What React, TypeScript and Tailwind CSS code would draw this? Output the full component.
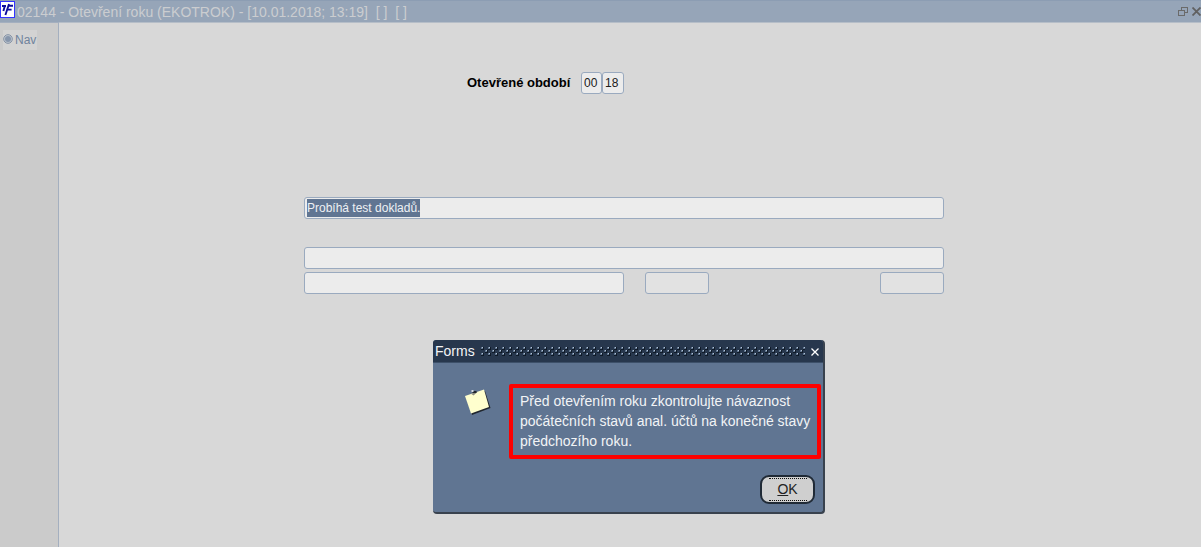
import type { ReactNode } from "react";
import { clsx } from "clsx";

const fieldClass =
  "h-[22px] rounded-[3px] border border-[#9aaabf] px-0.5 text-[12px] text-[#202020] outline-none";

interface FieldProps {
  id?: string;
  label?: string;
  value?: string;
  disabled?: boolean;
  className?: string;
}

function Field({ id, label, value = "", disabled, className }: FieldProps) {
  return (
    <input
      id={id}
      type="text"
      aria-label={label}
      defaultValue={value}
      disabled={disabled}
      className={clsx(fieldClass, disabled ? "bg-[#e2e2e2]" : "bg-[#ececec]", className)}
    />
  );
}

function Logo() {
  return (
    <svg className="h-[17px] w-[15px] shrink-0" viewBox="0 0 15 17" aria-hidden="true">
      <rect x="0.5" y="0.5" width="14" height="16" fill="#fff" stroke="#3434ff" />
      <path d="M2 5h4M4.8 5L3.4 10M9 3L5.4 14M7.8 4.8h5.2M7.2 8.6h4.4" stroke="#0c0c9c" strokeWidth="1.9" fill="none" />
    </svg>
  );
}

function TitleBar({ children }: { children: ReactNode }) {
  return (
    <header className="flex h-[22px] items-start border-t border-[#8c9db3] bg-[#96a5b8]">
      <Logo />
      <h1 className="ml-0.5 flex-1 text-[14px] leading-[22px] whitespace-pre text-[#cbcdd0]">{children}</h1>
      <div className="flex h-full items-center gap-1">
        <button type="button" aria-label="Obnovit" className="block">
          <svg className="h-[9px] w-[10px]" viewBox="0 0 10 9" fill="none" stroke="#6a6a6a" shapeRendering="crispEdges">
            <path d="M3 0.5h6.5v5H7M3.5 1v2M0.5 3.5h6v5h-6z" />
          </svg>
        </button>
        <button type="button" aria-label="Zavřít" className="block">
          <svg className="size-[9px]" viewBox="0 0 9 9" stroke="#606060" strokeWidth="1.8">
            <path d="M0.5 0.5l8 8M8.5 0.5l-8 8" />
          </svg>
        </button>
      </div>
    </header>
  );
}

function NavPanel() {
  return (
    <nav className="w-[59px] shrink-0 border-t border-r border-[#a4afbf] bg-[#cbcbcb] pt-[7px] pl-[3px]">
      <button type="button" className="flex h-5 w-[34px] items-center gap-0.5 bg-[#d3d3d3] text-[12px] text-[#70839d]">
        <svg className="mb-0.5 size-[10px] shrink-0" viewBox="0 0 10 10" aria-hidden="true">
          <circle cx="5" cy="5" r="4.3" fill="#c4cad2" stroke="#8290a4" strokeWidth="1" />
          <circle cx="5" cy="5" r="3" fill="#8796ac" />
        </svg>
        Nav
      </button>
    </nav>
  );
}

function Grip() {
  return (
    <svg className="mx-1.5 h-[9px] min-w-0 flex-1" aria-hidden="true" shapeRendering="crispEdges">
      <defs>
        <pattern id="grip" width="7" height="6" patternUnits="userSpaceOnUse">
          <path d="M0 0h3v3H0zM4 3h3v3H4z" fill="#0f1a28" />
          <path d="M0 0h2v2H0zM4 3h2v2H4z" fill="#5f748e" />
          <path d="M1 0h1v1H1zM5 3h1v1H5z" fill="#b4c4d6" />
        </pattern>
      </defs>
      <rect width="100%" height="100%" fill="url(#grip)" />
    </svg>
  );
}

function NoteIcon() {
  return (
    <svg className="size-[28px] shrink-0" viewBox="0 0 28 28" aria-hidden="true">
      <path d="M2 9L21 3l5.5 17L8 27z" fill="#20262e" />
      <path d="M1 8L20 1.5l5 17.5L7 25.5z" fill="#ffffce" />
      <path d="M7 5.8l7-2.4-4.5 4z" fill="#8d8d80" />
      <path d="M8.5 3h4v2h-4z" fill="#20262e" />
      <path d="M7.5 2h2v2h-2z" fill="#d8dce2" />
    </svg>
  );
}

function MessageDialog() {
  return (
    <section
      role="alertdialog"
      aria-labelledby="dialog-title"
      aria-describedby="dialog-text"
      className="w-[392px] rounded-[4px] border-r-2 border-b-2 border-[#39424e] bg-[#607592] text-[14px] text-[#f2f4f6]"
    >
      <header className="flex h-[23px] items-center rounded-t-[3px] border-b border-[#3d5069] bg-[#27374d] pt-px pr-1 pl-0.5">
        <h2 id="dialog-title">Forms</h2>
        <Grip />
        <button type="button" aria-label="Zavřít" className="block">
          <svg className="size-[8px]" viewBox="0 0 8 8" stroke="#fff" strokeWidth="1.3">
            <path d="M0.5 0.5l7 7M7.5 0.5l-7 7" />
          </svg>
        </button>
      </header>
      <div className="flex items-start gap-[17px] pt-[21px] pr-[3px] pl-[31px]">
        <div className="pt-1">
          <NoteIcon />
        </div>
        <p
          id="dialog-text"
          className="flex-1 rounded-[2px] border-4 border-[#fe0000] px-[7px] pt-[3px] pb-1 leading-5 whitespace-nowrap"
        >
          Před otevřením roku zkontrolujte návaznost
          <br />
          počátečních stavů anal. účtů na konečné stavy
          <br />
          předchozího roku.
        </p>
      </div>
      <div className="flex justify-end pt-4 pr-2 pb-2">
        <button
          type="button"
          className="flex h-[29px] w-[55px] items-center justify-center rounded-[9px] border-2 border-[#202a36] bg-[#cfcfcf] text-[#222]"
        >
          <span className="flex h-[23px] w-[38px] items-center justify-center border-y border-dotted border-[#111]">
            <span className="underline">O</span>K
          </span>
        </button>
      </div>
    </section>
  );
}

export default function App() {
  return (
    <div className="flex min-h-screen flex-col bg-[#d8d8d8] font-['Liberation_Sans',Arial,sans-serif]">
      <TitleBar>{"02144 - Otevření roku (EKOTROK) - [10.01.2018; 13:19]  [ ]  [ ]"}</TitleBar>
      <div className="flex flex-1">
        <NavPanel />
        <main className="relative min-w-0 flex-1 border-t border-[#b6bec8] pt-[49px] pr-3">
          <form className="mx-auto max-w-[640px]">
            <div className="flex items-center pl-[163px]">
              <label htmlFor="period-month" className="w-[114px] shrink-0 text-[13px] font-bold text-black">
                Otevřené období
              </label>
              <Field id="period-month" value="00" className="w-[21px]" />
              <Field label="Rok" value="18" className="w-[22px]" />
            </div>
            <div
              role="status"
              className={clsx(fieldClass, "mt-[103px] flex items-center bg-[#ececec]")}
            >
              <span className="bg-[#607592] leading-[18px] text-[#eef1f4]">Probíhá test dokladů.</span>
            </div>
            <Field label="Průběh" className="mt-7 block w-full" />
            <div className="mt-[3px] flex">
              <Field label="Doklad" className="w-1/2" />
              <Field label="Od" disabled className="ml-[21px] w-1/10" />
              <Field label="Do" disabled className="ml-auto w-1/10" />
            </div>
          </form>
          <div className="absolute inset-x-0 top-[317px] flex justify-center pr-0.5">
            <MessageDialog />
          </div>
        </main>
      </div>
    </div>
  );
}
